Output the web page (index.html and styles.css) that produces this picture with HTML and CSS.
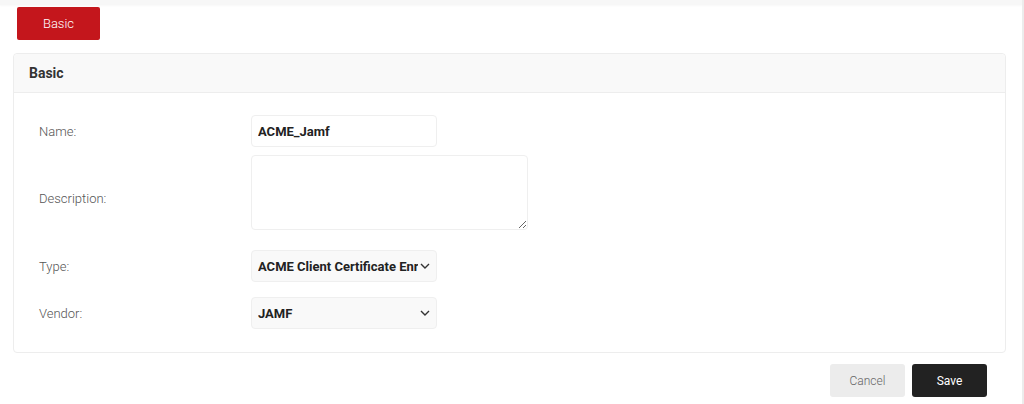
FILE: index.html
```html
<!DOCTYPE html>
<html lang="en">
<head>
  <meta charset="UTF-8">
  <title>Basic</title>
  <link rel="stylesheet" href="styles.css">
</head>
<body>

<div class="topbar"></div>

<div class="page">
  <div class="tabs">
    <button class="tab active">Basic</button>
  </div>

  <div class="panel">
    <div class="panel-head">Basic</div>
    <div class="panel-body">
      <div class="row row-name">
        <label>Name:</label>
        <input class="field" type="text" value="ACME_Jamf">
      </div>
      <div class="row row-desc">
        <label class="low">Description:</label>
        <textarea class="field area"></textarea>
      </div>
      <div class="row row-type">
        <label>Type:</label>
        <select class="field pick">
          <option>ACME Client Certificate Enrollment</option>
        </select>
      </div>
      <div class="row">
        <label>Vendor:</label>
        <select class="field pick">
          <option>JAMF</option>
        </select>
      </div>
    </div>
  </div>

  <div class="actions">
    <button class="btn cancel">Cancel</button>
    <button class="btn save">Save</button>
  </div>
</div>

</body>
</html>
```

FILE: styles.css
```css
html, body {
  margin: 0;
  padding: 0;
  height: 100%;
}

body {
  font-family: Roboto, "Liberation Sans", sans-serif;
  background: #fff;
  color: #333;
  border-right: 2px solid #ececec;
  box-sizing: border-box;
  overflow: hidden;
}

.topbar {
  height: 5px;
  background: #f7f7f7;
  box-shadow: 0 1px 2px rgba(0,0,0,0.03);
}

.page {
  padding: 0 16px 0 13px;
}

.tabs {
  display: flex;
  padding: 2px 0 0 4px;
  height: 46px;
}

.tab {
  width: 83px;
  height: 33px;
  border: none;
  border-radius: 2px;
  font-family: inherit;
  font-size: 13px;
  font-weight: 300;
  cursor: pointer;
}

.tab.active {
  background: #c4161c;
  color: #fff;
}

.panel {
  border: 1px solid #ededed;
  border-radius: 4px;
}

.panel-head {
  height: 38px;
  line-height: 38px;
  padding-left: 15px;
  background: #f9f9f9;
  border-bottom: 1px solid #ededed;
  border-radius: 4px 4px 0 0;
  font-size: 14px;
  font-weight: bold;
  color: #333;
}

.panel-body {
  padding: 22px 0 23px 25px;
}

.row {
  display: grid;
  grid-template-columns: 212px auto;
  align-items: center;
}

.row-name { margin-bottom: 8px; }
.row-desc { margin-bottom: 20px; }
.row-type { margin-bottom: 15px; }

.row label {
  font-size: 13px;
  font-weight: 300;
  color: #555;
}

.row label.low {
  padding-top: 12px;
}

.field {
  box-sizing: border-box;
  width: 186px;
  height: 32px;
  border: 1px solid #efefef;
  border-radius: 4px;
  padding: 0 6px;
  font-family: Roboto, "Liberation Sans", sans-serif;
  font-size: 13px;
  font-weight: bold;
  color: #222;
  background: #fff;
  outline: none;
}

.area {
  width: 277px;
  height: 75px;
  resize: both;
}

.pick {
  background: #f9f9f9;
  appearance: none;
  padding-right: 18px;
  background-image: url("data:image/svg+xml,%3Csvg xmlns='http://www.w3.org/2000/svg' width='10' height='6' viewBox='0 0 10 6'%3E%3Cpath d='M1 1l4 4 4-4' fill='none' stroke='%23333' stroke-width='1.4'/%3E%3C/svg%3E");
  background-repeat: no-repeat;
  background-position: right 6px center;
}

.actions {
  display: flex;
  justify-content: flex-end;
  gap: 7px;
  padding: 11px 19px 0 0;
}

.btn {
  width: 75px;
  height: 33px;
  border: none;
  border-radius: 3px;
  font-family: inherit;
  font-size: 12px;
  cursor: pointer;
}

.cancel {
  background: #ececec;
  color: #666;
  font-weight: 300;
}

.save {
  background: #222;
  color: #fff;
}
```
